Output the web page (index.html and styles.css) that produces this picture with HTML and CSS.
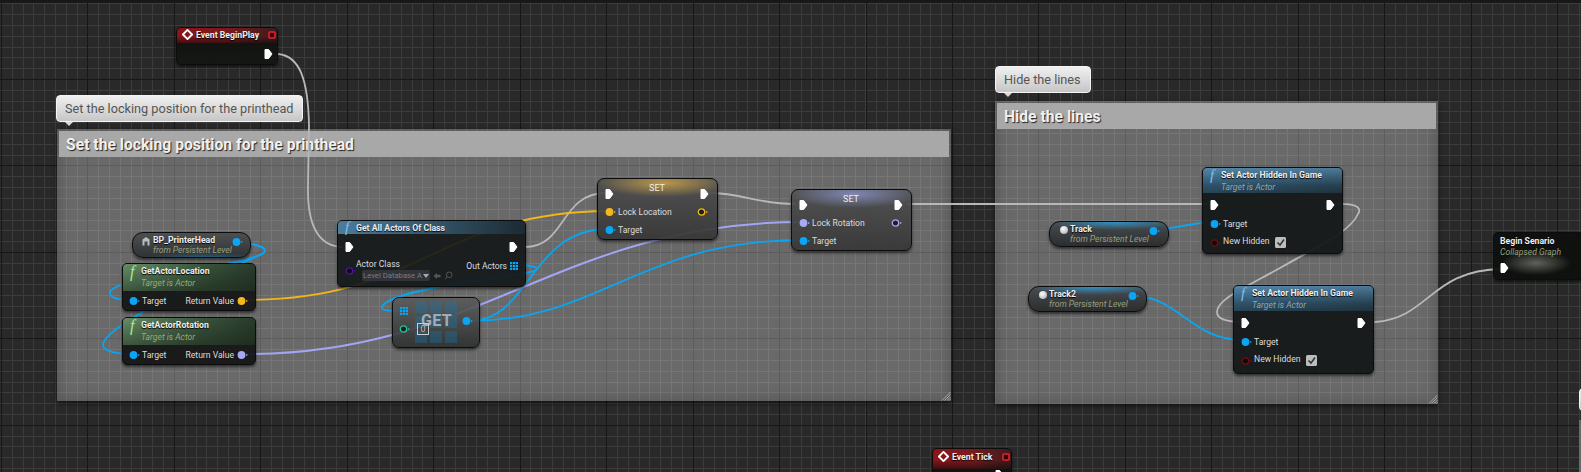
FILE: index.html
```html
<!DOCTYPE html>
<html lang="en">
<head>
<meta charset="utf-8">
<title>Blueprint graph</title>
<link rel="stylesheet" href="styles.css">
</head>
<body>
<svg class="defs" width="0" height="0" aria-hidden="true">
  <symbol id="exec" viewBox="0 0 9 12"><path d="M1 1.5H4.6L8 6L4.6 10.500H1Z" fill="#fff" stroke="#fff" stroke-linejoin="round"/></symbol>
  <symbol id="dot" viewBox="0 0 12 10"><circle cx="4.500" cy="5" r="3.900" fill="currentColor"/><path d="M9 3.900L11 5L9 6.100Z" fill="currentColor"/></symbol>
  <symbol id="ring" viewBox="0 0 12 10"><circle cx="4.500" cy="5" r="3.200" fill="rgba(0,0,0,.55)" stroke="currentColor" stroke-width="1.300"/><path d="M9 3.900L11 5L9 6.100Z" fill="currentColor"/></symbol>
  <symbol id="array" viewBox="0 0 9 9"><path d="M0 0h2.500v2.500H0zM3.250 0h2.500v2.500h-2.500zM6.500 0H9v2.500H6.500zM0 3.250h2.500v2.500H0zM3.250 3.250h2.500v2.500h-2.500zM6.500 3.250H9v2.500H6.500zM0 6.500h2.500V9H0zM3.250 6.500h2.500V9h-2.500zM6.500 6.500H9V9H6.500z" fill="#0aa5f5"/></symbol>
  <symbol id="event" viewBox="0 0 12 12"><path d="M6 1L11 6L6 11L1 6Z" fill="none" stroke="#fff" stroke-width="2"/></symbol>
  <symbol id="stop" viewBox="0 0 8 8"><rect x="1" y="1" width="6" height="6" rx="1" fill="#300" stroke="#f02030" stroke-width="1.500"/></symbol>
  <symbol id="grip" viewBox="0 0 10 10"><path d="M9.500 1L1 9.500M9.500 3.500L3.500 9.500M9.500 6L6 9.500M9.500 8.200L8.200 9.500" stroke="#bbb" stroke-width=".8" fill="none"/></symbol>
  <symbol id="actor" viewBox="0 0 8 10"><path d="M4 1L7.500 3.500V9.500H5.500V5.500H2.500V9.500H.5V3.500Z" fill="#bbb"/></symbol>
  <symbol id="check" viewBox="0 0 11 11"><rect width="11" height="11" rx="1.500" fill="#bdbdbd"/><path d="M2.500 5.500L5 8L9 2.500" fill="none" stroke="#333" stroke-width="1.500"/></symbol>
</svg>

<main class="canvas">
  <section class="comment comment-lock">
    <h2 class="comment-head">Set the locking position for the printhead</h2>
    <svg class="grip"><use href="#grip"/></svg>
  </section>
  <div class="bubble bubble-lock">Set the locking position for the printhead</div>

  <section class="comment comment-hide">
    <h2 class="comment-head">Hide the lines</h2>
    <svg class="grip"><use href="#grip"/></svg>
  </section>
  <div class="bubble bubble-hide">Hide the lines</div>
  <div class="bubble bubble-edge"></div>
  <div class="comment-edge"></div>

  <svg class="wires" viewBox="0 0 1581 472">
    <g class="w-exec">
      <path d="M278 54C300 56 308 80 309 125L308 185C307 225 318 246 342 247"/>
      <path d="M525 247C566 247 560 193 606 193"/>
      <path d="M708 193C745 193 755 204 796 204"/>
      <path d="M908 204H1212"/>
      <path d="M1335 204C1352 203 1363 206 1358 214C1350 232 1320 245 1280 268C1240 290 1217 300 1217 312C1217 320 1230 322 1243 322"/>
      <path d="M1375 322C1430 318 1430 270 1502 269"/>
    </g>
    <g class="w-blue">
      <path d="M236 242C262 244 272 250 260 255C225 270 110 278 110 293C110 299 122 300 132 300"/>
      <path d="M236 242C262 244 272 250 260 255C225 270 103 325 103 345C103 352 120 354 132 354"/>
      <path d="M514 265C530 265 540 267 536 270C530 274 500 277 460 283C420 290 382 298 382 308C382 311 395 311 403 311"/>
      <path d="M470 321C530 321 530 229 608 229"/>
      <path d="M470 321C600 321 640 240 803 240"/>
      <path d="M1153 231L1212 221"/>
      <path d="M1132 296C1180 296 1190 340 1243 340"/>
    </g>
    <path class="w-gold" d="M247 300C420 300 440 212 608 211"/>
    <path class="w-lav" d="M247 354C480 354 560 222 803 222"/>
  </svg>

  <article class="node node-event node-begin">
    <header class="event-head">
      <svg class="ico-event"><use href="#event"/></svg>
      <span class="title">Event BeginPlay</span>
      <svg class="ico-stop"><use href="#stop"/></svg>
    </header>
    <div class="row row-end"><svg class="exec"><use href="#exec"/></svg></div>
  </article>

  <article class="node node-getall">
    <header class="fn-head fn-blue"><i class="fx">f</i><span class="title">Get All Actors Of Class</span></header>
    <div class="body">
      <div class="row row-between"><svg class="exec"><use href="#exec"/></svg><svg class="exec"><use href="#exec"/></svg></div>
      <div class="row row-between row-class">
        <div class="class-left">
          <svg class="pin pin-purple"><use href="#ring"/></svg>
          <div class="class-col">
            <span class="label">Actor Class</span>
            <div class="class-input"><div class="select"><span class="select-text">Level Database A</span><b class="caret"></b></div><svg class="back" viewBox="0 0 9 9"><path d="M4.500 1L.5 4.500L4.500 8V6H8.500V3H4.500Z"/></svg><svg class="lens" viewBox="0 0 9 9"><circle cx="5.200" cy="3.800" r="2.800"/><path d="M3.200 5.800L.8 8.200"/></svg></div>
          </div>
        </div>
        <div class="pin-right"><span class="label">Out Actors</span><svg class="grid-pin"><use href="#array"/></svg></div>
      </div>
    </div>
  </article>

  <article class="node node-get">
    <div class="tiles"><span></span><span></span><span></span><span></span><span></span><span></span><span></span><span></span><span></span></div>
    <span class="get-word">GET</span>
    <svg class="grid-pin get-array"><use href="#array"/></svg>
    <svg class="pin pin-green get-index"><use href="#ring"/></svg>
    <span class="get-box">0</span>
    <svg class="pin pin-blue get-out"><use href="#dot"/></svg>
  </article>

  <article class="node pill pill-printer">
    <svg class="ico-actor"><use href="#actor"/></svg>
    <div class="pill-text"><span class="title">BP_PrinterHead</span><span class="sub">from Persistent Level</span></div>
    <svg class="pin pin-blue"><use href="#dot"/></svg>
  </article>

  <article class="node node-getter node-loc">
    <header class="fn-head fn-green"><i class="fx">f</i><div class="head-text"><span class="title">GetActorLocation</span><span class="sub">Target is Actor</span></div></header>
    <div class="row row-between row-pure">
      <div class="pin-left"><svg class="pin pin-blue"><use href="#dot"/></svg><span class="label">Target</span></div>
      <div class="pin-right"><span class="label">Return Value</span><svg class="pin pin-gold"><use href="#dot"/></svg></div>
    </div>
  </article>

  <article class="node node-getter node-rot">
    <header class="fn-head fn-green"><i class="fx">f</i><div class="head-text"><span class="title">GetActorRotation</span><span class="sub">Target is Actor</span></div></header>
    <div class="row row-between row-pure">
      <div class="pin-left"><svg class="pin pin-blue"><use href="#dot"/></svg><span class="label">Target</span></div>
      <div class="pin-right"><span class="label">Return Value</span><svg class="pin pin-lav"><use href="#dot"/></svg></div>
    </div>
  </article>

  <article class="node node-set node-set-gold">
    <div class="row row-between row-set"><svg class="exec"><use href="#exec"/></svg><span class="set-title">SET</span><svg class="exec"><use href="#exec"/></svg></div>
    <div class="row row-between row-set">
      <div class="pin-left"><svg class="pin pin-gold"><use href="#dot"/></svg><span class="label">Lock Location</span></div>
      <svg class="pin pin-gold"><use href="#ring"/></svg>
    </div>
    <div class="row row-set"><div class="pin-left"><svg class="pin pin-blue"><use href="#dot"/></svg><span class="label">Target</span></div></div>
  </article>

  <article class="node node-set node-set-lav">
    <div class="row row-between row-set"><svg class="exec"><use href="#exec"/></svg><span class="set-title">SET</span><svg class="exec"><use href="#exec"/></svg></div>
    <div class="row row-between row-set">
      <div class="pin-left"><svg class="pin pin-lav"><use href="#dot"/></svg><span class="label">Lock Rotation</span></div>
      <svg class="pin pin-lav"><use href="#ring"/></svg>
    </div>
    <div class="row row-set"><div class="pin-left"><svg class="pin pin-blue"><use href="#dot"/></svg><span class="label">Target</span></div></div>
  </article>

  <article class="node pill pill-track">
    <span class="sphere"></span>
    <div class="pill-text"><span class="title">Track</span><span class="sub">from Persistent Level</span></div>
    <svg class="pin pin-blue"><use href="#dot"/></svg>
  </article>

  <article class="node pill pill-track2">
    <span class="sphere"></span>
    <div class="pill-text"><span class="title">Track2</span><span class="sub">from Persistent Level</span></div>
    <svg class="pin pin-blue"><use href="#dot"/></svg>
  </article>

  <article class="node node-hidden node-hidden-a">
    <header class="fn-head fn-blue fn-tall"><i class="fx">f</i><div class="head-text"><span class="title">Set Actor Hidden In Game</span><span class="sub sub-blue">Target is Actor</span></div></header>
    <div class="row row-between row-hidden"><svg class="exec"><use href="#exec"/></svg><svg class="exec"><use href="#exec"/></svg></div>
    <div class="row row-hidden"><div class="pin-left"><svg class="pin pin-blue"><use href="#dot"/></svg><span class="label">Target</span></div></div>
    <div class="row row-hidden"><div class="pin-left"><svg class="pin pin-red"><use href="#ring"/></svg><span class="label label-up">New Hidden</span><svg class="check"><use href="#check"/></svg></div></div>
  </article>

  <article class="node node-hidden node-hidden-b">
    <header class="fn-head fn-blue fn-tall"><i class="fx">f</i><div class="head-text"><span class="title">Set Actor Hidden In Game</span><span class="sub sub-blue">Target is Actor</span></div></header>
    <div class="row row-between row-hidden"><svg class="exec"><use href="#exec"/></svg><svg class="exec"><use href="#exec"/></svg></div>
    <div class="row row-hidden"><div class="pin-left"><svg class="pin pin-blue"><use href="#dot"/></svg><span class="label">Target</span></div></div>
    <div class="row row-hidden"><div class="pin-left"><svg class="pin pin-red"><use href="#ring"/></svg><span class="label label-up">New Hidden</span><svg class="check"><use href="#check"/></svg></div></div>
  </article>

  <article class="node node-collapsed">
    <div class="head-text"><span class="title">Begin Senario</span><span class="sub">Collapsed Graph</span></div>
    <svg class="exec"><use href="#exec"/></svg>
  </article>

  <article class="node node-event node-tick">
    <header class="event-head">
      <svg class="ico-event"><use href="#event"/></svg>
      <span class="title">Event Tick</span>
      <svg class="ico-stop"><use href="#stop"/></svg>
    </header>
    <div class="row row-end"><svg class="exec"><use href="#exec"/></svg></div>
  </article>
</main>
</body>
</html>
```
FILE: styles.css
```css
* { box-sizing: border-box; }
html, body { margin: 0; padding: 0; }
body { width: 1581px; height: 472px; overflow: hidden; background: #272727; font-family: Roboto, "Liberation Sans", sans-serif; }
.defs { position: absolute; }

.canvas {
  position: relative; width: 1581px; height: 472px; overflow: hidden;
  background-color: #292929;
  background-image:
    linear-gradient(to bottom, #181818 3px, transparent 3px),
    repeating-linear-gradient(to right, transparent 0, transparent 1px, #171717 1px, #171717 2px, transparent 2px, transparent 86.45px),
    repeating-linear-gradient(to bottom, transparent 0, transparent 79px, #171717 79px, #171717 80px, transparent 80px, transparent 86.45px),
    repeating-linear-gradient(to right, transparent 0, transparent 1px, #3c3c3c 1px, #3c3c3c 2px, transparent 2px, transparent 10.806px),
    repeating-linear-gradient(to bottom, transparent 0, transparent 3.4px, #3c3c3c 3.4px, #3c3c3c 4.4px, transparent 4.4px, transparent 10.806px);
}

/* comments */
.comment { position: absolute; padding: 2px 2px 0; background: rgba(255,255,255,.3); box-shadow: 0 2px 5px rgba(0,0,0,.6), inset 0 0 16px rgba(0,0,0,.22); }
.comment-lock { left: 57px; top: 129px; width: 894px; height: 272px; }
.comment-hide { left: 995px; top: 101px; width: 443px; height: 303px; }
.comment-head { margin: 0; height: 26px; padding-left: 7px; background: #a8a8a8; color: #f0f0f0; font-size: 15.7px; line-height: 28px; font-weight: 700; text-shadow: 1px 1px 1px #222; }
.grip { position: absolute; right: 0; bottom: 0; width: 10px; height: 10px; }
.comment-edge { position: absolute; left: 1579px; top: 420px; width: 2px; height: 52px; background: #6a6a6a; }

.bubble { position: absolute; height: 27px; padding: 0 8px; border-radius: 4px; border: 1px solid #f4f4f4; background: linear-gradient(#f0f0f0, #c6c6c6); color: #555; font-size: 12.7px; line-height: 25px; white-space: nowrap; }
.bubble::after { content: ""; position: absolute; left: 8px; top: 26px; border: 4px solid transparent; border-top-color: #d8d8d8; border-bottom: 0; }
.bubble-lock { left: 56px; top: 95px; width: 247px; }
.bubble-hide { left: 995px; top: 66px; width: 96px; }
.bubble-edge { left: 1579px; top: 388px; width: 10px; height: 23px; }
.bubble-edge::after { display: none; }

/* wires */
.wires { position: absolute; left: 0; top: 0; width: 1581px; height: 472px; fill: none; stroke-width: 1.8; stroke-linecap: round; }
.w-exec { stroke: #b8b8b8; }
.w-blue { stroke: #0aa5f0; }
.w-gold { stroke: #f2b61c; }
.w-lav { stroke: #a0a6f5; stroke-width: 2; }

/* nodes */
.node { position: absolute; border: 1px solid #0c0c0c; border-radius: 5px; color: #e6e6e6; box-shadow: 0 2px 3px rgba(0,0,0,.55); }
.title { display: block; font-size: 8.7px; line-height: 12px; font-weight: 700; color: #eee; white-space: nowrap; text-shadow: 0 1px 1px #000; }
.sub { display: block; font-size: 8.6px; line-height: 11px; font-style: italic; color: #99a07c; white-space: nowrap; }
.sub-blue { color: #8fa5a8; }
.label { font-size: 8.6px; line-height: 12px; color: #ddd; white-space: nowrap; }
.label-up { position: relative; top: -2px; }
.row { display: flex; align-items: center; }
.row-between { justify-content: space-between; }
.row-end { justify-content: flex-end; }
.pin-left, .pin-right { display: flex; align-items: center; }
.pin-left { gap: 1px; }
.pin-right { gap: 3px; }

.exec { display: block; width: 9px; height: 12px; flex: none; }
.pin { display: block; width: 12px; height: 10px; flex: none; }
.grid-pin { display: block; width: 8px; height: 8px; flex: none; }
.pin-blue { color: #0aa5f5; }
.pin-gold { color: #f5b81c; }
.pin-lav { color: #a5aaf5; }
.pin-red { color: #7a0a0a; }
.pin-purple { color: #5212a5; }
.pin-green { color: #25c49a; }

/* event nodes */
.node-event { background: linear-gradient(rgba(12,14,12,.93), rgba(20,22,20,.95)); }
.event-head { display: flex; align-items: center; height: 15px; padding: 0 1px 2px 5px; border-radius: 4px 4px 0 0; background: linear-gradient(rgba(0,0,0,0) 55%, rgba(10,10,10,.6)), linear-gradient(to right, #8c1419, #7a1a1e 50%, #3c1c1c); }
.ico-event { width: 11px; height: 11px; flex: none; margin-right: 3px; }
.ico-stop { width: 8px; height: 8px; flex: none; margin-left: auto; }
.node-begin { left: 176px; top: 27px; width: 102px; height: 38px; }
.node-begin .row { height: 21px; padding-right: 4px; }
.node-tick { left: 932px; top: 448px; width: 80px; height: 60px; }
.node-tick .event-head { height: 20px; padding-bottom: 5px; }
.node-tick .row { padding-right: 7px; }

/* function heads */
.fn-head { display: flex; align-items: flex-start; padding: 0 0 0 7px; border-radius: 4px 4px 0 0; }
.fx { display: block; width: 11px; font-family: "Liberation Serif", serif; font-size: 15px; line-height: 13px; font-style: italic; flex: none; }
.head-text { display: flex; flex-direction: column; }
.fn-blue { height: 13px; background: linear-gradient(to right, #4d7c9c, #33566c 50%, #1c2a33); }
.fn-blue .fx { color: #7cc0f0; }
.fn-tall { height: 25px; padding-top: 1px; background: linear-gradient(rgba(88,140,175,.8), rgba(40,70,90,.7) 70%, rgba(30,50,60,.7)), linear-gradient(to right, #3d6f90, #22323c); }
.fn-green { height: 27px; padding-top: 1px; background: linear-gradient(rgba(20,40,25,.1), rgba(20,30,20,.55)), linear-gradient(to right, #6f9a70, #3e5a40 60%, #2c3e2f); }
.fn-green .fx { color: #b0e890; font-size: 16px; }
.fn-green .sub { color: #93ab7c; margin-top: 1px; }
.fn-tall .sub { margin-top: 1px; }

.node-getall { left: 337px; top: 220px; width: 189px; height: 67px; background: rgba(18,22,22,.9); }
.node-getall .title { line-height: 14px; }
.node-getall .body { padding: 5px 7px 0 7px; }
.node-getall .row { height: 16px; }
.row-class { align-items: flex-start; margin-top: 2px; }
.class-left { display: flex; align-items: center; }
.class-col { display: flex; flex-direction: column; gap: 0; margin-left: -1px; padding-top: 1px; }
.class-left .pin { margin-top: 4px; }
.class-input { display: flex; align-items: center; gap: 3px; margin-left: 6px; }
.select { display: flex; align-items: center; width: 68px; height: 11px; padding-left: 1px; background: #30343a; border-radius: 2px; }
.select-text { flex: 1; min-width: 0; color: #7c7c7c; font-size: 7.7px; line-height: 11px; white-space: nowrap; }
.caret { flex: none; margin: 0 1px; border: 3px solid transparent; border-top: 4px solid #aaa; border-bottom: 0; }
.back { width: 8px; height: 8px; flex: none; fill: #555; }
.lens { width: 9px; height: 9px; flex: none; fill: none; stroke: #555; stroke-width: 1; }
.row-class .pin-right { padding-top: 3px; }

.node-get { left: 392px; top: 297px; width: 88px; height: 51px; border-radius: 7px; background: linear-gradient(rgba(90,90,90,.85), rgba(45,48,48,.9)); }
.tiles { position: absolute; left: 22px; top: 3px; display: grid; grid-template-columns: repeat(3, 12px); grid-auto-rows: 12px; gap: 3px; }
.tiles span { background: rgba(20,120,175,.35); }
.get-word { position: absolute; left: 28px; top: 12px; color: rgba(195,195,195,.8); font-size: 16px; line-height: 22px; font-weight: 700; letter-spacing: .4px; }
.get-array { position: absolute; left: 7px; top: 9px; }
.get-index { position: absolute; left: 6px; top: 26px; }
.get-box { position: absolute; left: 24px; top: 25px; width: 12px; height: 12px; border: 1px solid #ccc; color: #bbb; font-size: 9px; line-height: 10px; text-align: center; }
.get-out { position: absolute; left: 69px; top: 18px; }

/* pills */
.pill { display: flex; align-items: center; height: 26px; border-radius: 11px; background: linear-gradient(rgba(75,78,80,.95), rgba(50,52,54,.95) 55%, rgba(38,40,42,.95)); }
.pill-text { display: flex; flex-direction: column; }
.pill-text .title, .pill-text .sub { line-height: 10px; }
.pill .pin { margin-left: auto; margin-right: 10px; margin-top: -7px; }
.pill-printer { left: 132px; top: 232px; width: 119px; padding-left: 9px; background: radial-gradient(ellipse 50% 4px at 60% 100%, rgba(25,120,175,.6), transparent), linear-gradient(rgba(75,78,80,.95), rgba(45,48,50,.95)); }
.ico-actor { width: 8px; height: 10px; flex: none; margin: -8px 3px 0 0; }
.pill-track { left: 1049px; top: 221px; width: 120px; padding-left: 10px; }
.pill-track2 { left: 1028px; top: 286px; width: 119px; padding-left: 10px; }
.pill-track, .pill-track2 { background: radial-gradient(ellipse 55% 8px at 55% 0, rgba(45,155,215,.85), transparent), linear-gradient(rgba(70,75,78,.95), rgba(40,42,44,.95)); }
.sphere { width: 8px; height: 8px; flex: none; margin: -9px 2px 0 0; border-radius: 50%; background: radial-gradient(circle at 40% 35%, #fff, #ccc 55%, #888); }

/* pure getters */
.node-getter { left: 122px; width: 134px; height: 48px; background: rgba(18,20,18,.92); }
.node-loc { top: 263px; }
.node-rot { top: 317px; }
.row-pure { height: 20px; padding: 0 6px 0 6px; }

/* set nodes */
.node-set { width: 121px; height: 62px; border-radius: 7px; padding: 6px 8px 0 7px; }
.row-set { height: 18px; }
.set-title { align-self: flex-start; margin-top: -2px; font-size: 9px; line-height: 10px; color: #eee; }
.node-set-gold { left: 597px; top: 178px; background: radial-gradient(ellipse 55% 14px at 55% 4px, rgba(205,165,75,.85), transparent), linear-gradient(rgba(78,78,78,.9), rgba(54,54,54,.92)); }
.node-set-lav { left: 791px; top: 189px; background: radial-gradient(ellipse 55% 14px at 52% 4px, rgba(135,145,195,.85), transparent), linear-gradient(rgba(78,78,78,.9), rgba(54,54,54,.92)); }

/* set actor hidden */
.node-hidden { width: 141px; background: rgba(20,24,24,.95); }
.node-hidden-a { left: 1202px; top: 167px; height: 87px; }
.node-hidden-b { left: 1233px; top: 285px; height: 89px; }
.row-hidden { height: 19px; padding: 0 7px 0 7px; }
.row-hidden:nth-child(2) { margin-top: 2px; }
.check { width: 11px; height: 11px; flex: none; margin-left: 4px; }

/* collapsed */
.node-collapsed { left: 1493px; top: 232px; width: 100px; height: 48px; padding: 2px 0 0 6px; background: radial-gradient(ellipse 35px 12px at 42px 30px, rgba(120,125,115,.75), transparent), rgba(14,16,14,.95); }
.node-collapsed .exec { margin-top: 4px; }
```
